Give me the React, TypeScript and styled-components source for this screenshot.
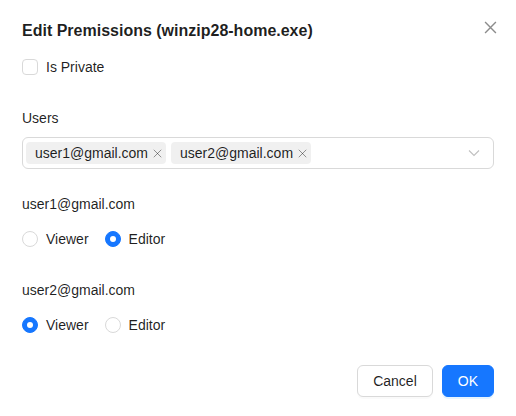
import React, { useState } from 'react'
import styled, { createGlobalStyle } from 'styled-components'

const GlobalStyle = createGlobalStyle`
  html, body {
    margin: 0;
    padding: 0;
    background: #ffffff;
  }
  body {
    font-family: "Liberation Sans", Arial, sans-serif;
    font-size: 14px;
    color: rgba(0, 0, 0, 0.88);
  }
  * {
    box-sizing: border-box;
  }
`

const Modal = styled.div`
  position: relative;
  width: 516px;
  min-height: 416px;
  padding: 20px 22px 18px;
  background: #fff;
  display: flex;
  flex-direction: column;

  & > * {
    flex-shrink: 0;
  }
`

const Title = styled.div`
  font-size: 16px;
  font-weight: 700;
  line-height: 22px;
  color: rgba(0, 0, 0, 0.88);
  margin-bottom: 14px;
`

const CloseButton = styled.button`
  position: absolute;
  top: 15px;
  right: 14px;
  width: 24px;
  height: 24px;
  padding: 0;
  border: none;
  background: transparent;
  display: flex;
  align-items: center;
  justify-content: center;
  cursor: pointer;
  color: rgba(0, 0, 0, 0.45);
`

const Block = styled.div<{ $mb?: number }>`
  line-height: 22px;
  margin-bottom: ${(p) => p.$mb ?? 0}px;
`

const Row = styled.label<{ $mb?: number }>`
  display: flex;
  align-items: center;
  height: 22px;
  margin-bottom: ${(p) => p.$mb ?? 0}px;
  cursor: pointer;
`

const CheckBox = styled.span`
  width: 16px;
  height: 16px;
  border: 1px solid #d9d9d9;
  border-radius: 4px;
  background: #fff;
  margin-right: 8px;
`

const RadioGroup = styled.div<{ $mb?: number }>`
  display: flex;
  align-items: center;
  height: 22px;
  margin-bottom: ${(p) => p.$mb ?? 0}px;
`

const RadioItem = styled.label`
  display: flex;
  align-items: center;
  margin-right: 8px;
  cursor: pointer;
`

const RadioCircle = styled.span<{ $checked: boolean }>`
  width: 16px;
  height: 16px;
  border-radius: 50%;
  border: 1px solid ${(p) => (p.$checked ? '#1677ff' : '#d9d9d9')};
  background: ${(p) => (p.$checked ? '#1677ff' : '#fff')};
  display: flex;
  align-items: center;
  justify-content: center;

  &::after {
    content: '';
    display: ${(p) => (p.$checked ? 'block' : 'none')};
    width: 6px;
    height: 6px;
    border-radius: 50%;
    background: #fff;
  }
`

const RadioText = styled.span`
  padding: 0 8px;
`

const Select = styled.div<{ $mb?: number }>`
  height: 32px;
  border: 1px solid #d9d9d9;
  border-radius: 6px;
  padding: 3px 3px;
  display: flex;
  align-items: center;
  gap: 5px;
  margin-bottom: ${(p) => p.$mb ?? 0}px;
`

const Tag = styled.span`
  height: 22px;
  line-height: 22px;
  background: rgba(0, 0, 0, 0.06);
  border-radius: 4px;
  padding: 0 4px 0 9px;
  display: flex;
  align-items: center;
  gap: 5px;
`

const TagRemove = styled.span`
  display: flex;
  align-items: center;
  color: rgba(0, 0, 0, 0.45);
`

const Arrow = styled.span`
  margin-left: auto;
  margin-right: 10px;
  display: flex;
  align-items: center;
  color: rgba(0, 0, 0, 0.25);
`

const Footer = styled.div`
  margin-top: 29px;
  display: flex;
  justify-content: flex-end;
  gap: 9px;
`

const Button = styled.button<{ $primary?: boolean }>`
  height: 32px;
  padding: 4px 15px;
  border-radius: 6px;
  font-family: inherit;
  font-size: 14px;
  border: 1px solid ${(p) => (p.$primary ? '#1677ff' : '#d9d9d9')};
  background: ${(p) => (p.$primary ? '#1677ff' : '#fff')};
  color: ${(p) => (p.$primary ? '#fff' : 'rgba(0, 0, 0, 0.88)')};
  box-shadow: ${(p) => (p.$primary ? '0 2px 0 rgba(5, 145, 255, 0.1)' : '0 2px 0 rgba(0, 0, 0, 0.02)')};
  cursor: pointer;
`

const CrossIcon = ({ size, stroke }: { size: number; stroke: number }) => (
  <svg width={size} height={size} viewBox="0 0 12 12" fill="none">
    <path d="M1 1L11 11M11 1L1 11" stroke="currentColor" strokeWidth={stroke} />
  </svg>
)

type Role = 'Viewer' | 'Editor'

const users = ['user1@gmail.com', 'user2@gmail.com']

export default function App() {
  const [roles, setRoles] = useState<Record<string, Role>>({
    'user1@gmail.com': 'Editor',
    'user2@gmail.com': 'Viewer',
  })

  return (
    <>
      <GlobalStyle />
      <Modal>
        <Title>Edit Premissions (winzip28-home.exe)</Title>
        <CloseButton aria-label="Close">
          <CrossIcon size={13} stroke={1.3} />
        </CloseButton>

        <Row $mb={29}>
          <CheckBox />
          Is Private
        </Row>

        <Block $mb={8}>Users</Block>
        <Select $mb={24}>
          {users.map((u) => (
            <Tag key={u}>
              {u}
              <TagRemove>
                <CrossIcon size={9} stroke={1.2} />
              </TagRemove>
            </Tag>
          ))}
          <Arrow>
            <svg width="12" height="8" viewBox="0 0 12 8" fill="none">
              <path d="M1 1.5L6 6.5L11 1.5" stroke="currentColor" strokeWidth="1.1" />
            </svg>
          </Arrow>
        </Select>

        {users.map((u, i) => (
          <React.Fragment key={u}>
            <Block $mb={13}>{u}</Block>
            <RadioGroup $mb={i === 0 ? 29 : 0}>
              {(['Viewer', 'Editor'] as Role[]).map((r) => (
                <RadioItem key={r} onClick={() => setRoles({ ...roles, [u]: r })}>
                  <RadioCircle $checked={roles[u] === r} />
                  <RadioText>{r}</RadioText>
                </RadioItem>
              ))}
            </RadioGroup>
          </React.Fragment>
        ))}

        <Footer>
          <Button>Cancel</Button>
          <Button $primary>OK</Button>
        </Footer>
      </Modal>
    </>
  )
}
